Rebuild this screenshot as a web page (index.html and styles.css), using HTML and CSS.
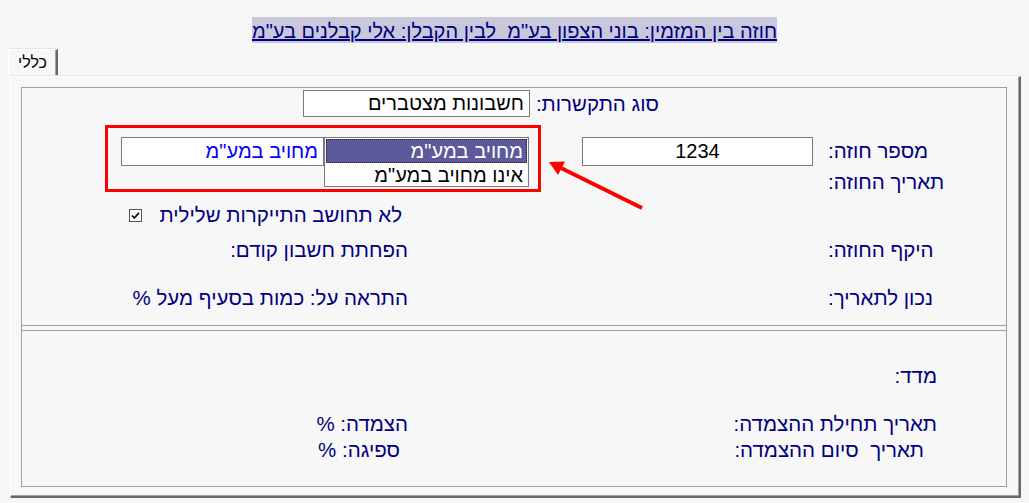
FILE: index.html
```html
<!DOCTYPE html>
<html lang="he" dir="rtl">
<head>
  <meta charset="UTF-8">
  <title>חוזה</title>
  <link rel="stylesheet" href="styles.css">
</head>
<body>
  <div class="title"><span>חוזה בין המזמין: בוני הצפון בע"מ&nbsp; לבין הקבלן: אלי קבלנים בע"מ</span></div>

  <div class="tabs">
    <div class="tab">כללי</div>
  </div>

  <div class="panel">
    <div class="inner">
      <div class="upper">
        <div class="row row-a">
          <span class="label">סוג התקשרות:</span>
          <input class="field field-type" type="text" value="חשבונות מצטברים" readonly>
        </div>

        <div class="row row-b">
          <div class="label-col">
            <div class="label">מספר חוזה:</div>
            <div class="label label-second">תאריך החוזה:</div>
          </div>
          <input class="field field-number" type="text" value="1234" readonly>
          <div class="highlight-box">
            <ul class="listbox">
              <li class="selected">מחויב במע"מ</li>
              <li>אינו מחויב במע"מ</li>
            </ul>
            <input class="field field-vat" type="text" value='מחויב במע"מ' readonly>
          </div>
        </div>

        <div class="row row-c">
          <span class="label">לא תחושב התייקרות שלילית</span>
          <span class="checkbox">
            <svg width="13" height="13" viewBox="0 0 13 13">
              <rect x="0.5" y="0.5" width="12" height="12" fill="#fff" stroke="#555"/>
              <path d="M3 6.5 L5.3 9 L10 3.8" fill="none" stroke="#111" stroke-width="1.8"/>
            </svg>
          </span>
        </div>

        <div class="row row-d">
          <div class="label-col label">היקף החוזה:</div>
          <span class="label side">הפחתת חשבון קודם:</span>
        </div>

        <div class="row row-e">
          <div class="label-col label">נכון לתאריך:</div>
          <span class="label side">התראה על: כמות בסעיף מעל %</span>
        </div>
      </div>

      <div class="sep"></div>

      <div class="lower">
        <div class="row low-1">
          <div class="low-label label">מדד:</div>
        </div>
        <div class="row low-2">
          <div class="low-label label">תאריך תחילת ההצמדה:</div>
          <span class="label">הצמדה: %</span>
        </div>
        <div class="row low-3">
          <div class="low-label label indent">תאריך&nbsp; סיום ההצמדה:</div>
          <span class="label spaced">ספיגה: %</span>
        </div>
      </div>
    </div>

    <svg class="arrow" width="110" height="65" viewBox="0 0 110 65">
      <line x1="100" y1="58" x2="18" y2="17.5" stroke="#ff0000" stroke-width="4"/>
      <polygon points="7,12 23,11.5 16,25" fill="#ff0000"/>
    </svg>
  </div>
</body>
</html>
```

FILE: styles.css
```css
body {
  font-family: "Liberation Sans", Arial, sans-serif;
  margin: 8px;
  background-color: #f7f7f7;
  color: #000080;
}
.title {
  text-align: center;
  font-size: 20px;
  line-height: 24px;
  padding-top: 11px;
  height: 30px;
}
.title span {
  background-color: #c8c8da;
  color: #000080;
  text-decoration: underline;
  padding: 3px 0 1px;
}
.tabs {
  display: flex;
  direction: ltr;
}
.tab {
  position: relative;
  width: 47px;
  height: 27px;
  margin-bottom: -1px;
  border-top: 1px solid #fff;
  border-left: 1px solid #fff;
  border-right: 2px solid #696969;
  box-shadow: inset -1px 0 #a0a0a0, 0 -1px #e3e3e3;
  background-color: #f7f7f7;
  color: #000;
  font-size: 16px;
  line-height: 26px;
  text-align: center;
}
.panel {
  position: relative;
  width: 1011px;
  height: 422px;
  box-sizing: border-box;
  padding: 10px 0 0 10px;
  border-top: 1px solid #fff;
  border-left: 1px solid #fff;
  border-right: 2px solid #696969;
  border-bottom: 2px solid #696969;
  box-shadow: inset -1px -1px #a0a0a0, 0 -1px #e3e3e3;
  direction: ltr;
}
.inner {
  direction: rtl;
  width: 986px;
  height: 400px;
  box-sizing: border-box;
  border: 1px solid #a0a0a0;
}
.label {
  font-size: 20.5px;
  line-height: 24px;
  color: #000080;
  white-space: nowrap;
}
.row {
  display: flex;
  align-items: center;
}
.upper {
  height: 237px;
}
.field {
  box-sizing: border-box;
  margin: 0;
  font-family: "Liberation Sans", Arial, sans-serif;
  font-size: 20px;
  color: #000;
  background-color: #fff;
  border: 1px solid #7a7a7a;
  outline: none;
}
.row-a {
  height: 31px;
  padding-right: 347px;
}
.field-type {
  width: 227px;
  height: 27px;
  margin-right: 6px;
  padding: 0 5px;
  text-align: right;
}
.row-b {
  height: 67px;
  margin-top: 6px;
  align-items: flex-start;
}
.label-col {
  width: 178px;
  text-align: left;
}
.row-b .label-col {
  padding-top: 14px;
}
.label-second {
  margin-top: 7px;
}
.field-number {
  width: 231px;
  height: 29px;
  margin-top: 12px;
  margin-right: 15px;
  text-align: center;
}
.highlight-box {
  display: flex;
  align-items: flex-start;
  width: 436px;
  height: 67px;
  box-sizing: border-box;
  margin-right: 41px;
  padding: 9px 9px 0 0;
  border: 3px solid #ff0000;
}
.listbox {
  list-style: none;
  margin: 0;
  padding: 1px;
  width: 205px;
  height: 50px;
  box-sizing: border-box;
  border: 1px solid #7a7a7a;
  background-color: #fff;
  font-size: 20px;
  line-height: 22px;
  color: #000;
}
.listbox li {
  padding: 0 3px;
  border: 1px dotted transparent;
  height: 22px;
}
.listbox .selected {
  background-color: #5c5a9b;
  color: #fff;
  border-color: #222;
}
.field-vat {
  width: 203px;
  height: 29px;
  padding: 0 5px;
  color: #0000ff;
  text-align: right;
}
.row-c {
  height: 46px;
  padding-right: 604px;
}
.checkbox {
  display: flex;
  margin-right: 18px;
}
.row-d {
  height: 24px;
}
.row-e {
  height: 24px;
  margin-top: 24px;
}
.side {
  margin-right: 420px;
}
.sep {
  height: 4px;
  border-top: 1px solid #a0a0a0;
  border-bottom: 1px solid #a0a0a0;
}
.low-label {
  width: 598px;
  box-sizing: border-box;
  padding-right: 69px;
  text-align: right;
}
.low-1 {
  height: 24px;
  margin-top: 33px;
}
.low-2 {
  height: 24px;
  margin-top: 24px;
}
.low-3 {
  height: 24px;
  margin-top: 2px;
}
.indent {
  padding-right: 82px;
}
.spaced {
  margin-right: 8px;
}
.arrow {
  position: absolute;
  left: 531px;
  top: 73px;
}
```
